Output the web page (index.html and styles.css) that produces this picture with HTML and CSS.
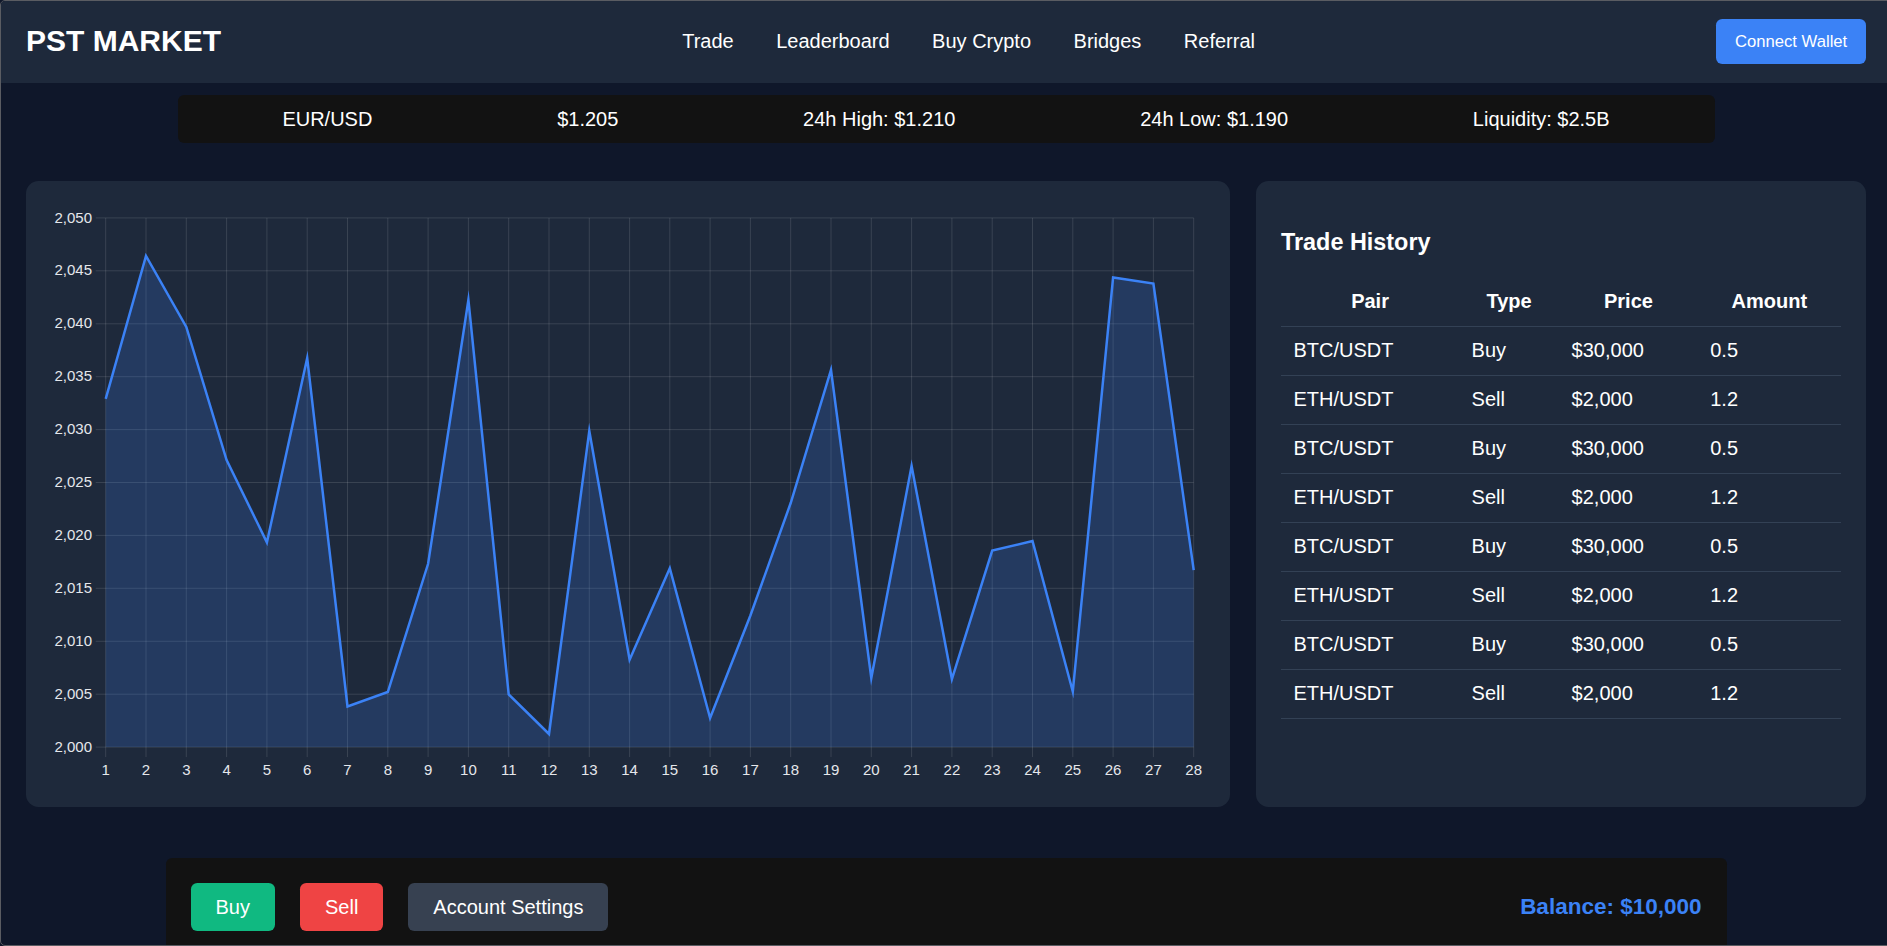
FILE: index.html
```html
<!DOCTYPE html>
<html lang="en">
<head>
<meta charset="utf-8">
<title>PST Market</title>
<link rel="stylesheet" href="styles.css">
</head>
<body>
<div class="frame">
  <header class="topbar">
    <div class="logo">PST MARKET</div>
    <nav class="nav">
      <a href="#">Trade</a>
      <a href="#">Leaderboard</a>
      <a href="#">Buy Crypto</a>
      <a href="#">Bridges</a>
      <a href="#">Referral</a>
    </nav>
    <button class="connect">Connect Wallet</button>
  </header>

  <main class="main">
    <div class="ticker">
      <span>EUR/USD</span>
      <span>$1.205</span>
      <span>24h High: $1.210</span>
      <span>24h Low: $1.190</span>
      <span>Liquidity: $2.5B</span>
    </div>

    <div class="panels">
      <section class="card chart-card">
        <svg class="chart" width="1154" height="576" viewBox="0 0 1154 576">
          <g class="grid">
            <line x1="44.7" y1="11.9" x2="1142.7" y2="11.9"/>
            <line x1="44.7" y1="64.8" x2="1142.7" y2="64.8"/>
            <line x1="44.7" y1="117.8" x2="1142.7" y2="117.8"/>
            <line x1="44.7" y1="170.7" x2="1142.7" y2="170.7"/>
            <line x1="44.7" y1="223.6" x2="1142.7" y2="223.6"/>
            <line x1="44.7" y1="276.5" x2="1142.7" y2="276.5"/>
            <line x1="44.7" y1="329.4" x2="1142.7" y2="329.4"/>
            <line x1="44.7" y1="382.3" x2="1142.7" y2="382.3"/>
            <line x1="44.7" y1="435.3" x2="1142.7" y2="435.3"/>
            <line x1="44.7" y1="488.2" x2="1142.7" y2="488.2"/>
            <line x1="44.7" y1="541.1" x2="1142.7" y2="541.1"/>
            <line x1="54.7" y1="11.9" x2="54.7" y2="551.1"/>
            <line x1="95.0" y1="11.9" x2="95.0" y2="551.1"/>
            <line x1="135.3" y1="11.9" x2="135.3" y2="551.1"/>
            <line x1="175.6" y1="11.9" x2="175.6" y2="551.1"/>
            <line x1="215.9" y1="11.9" x2="215.9" y2="551.1"/>
            <line x1="256.2" y1="11.9" x2="256.2" y2="551.1"/>
            <line x1="296.5" y1="11.9" x2="296.5" y2="551.1"/>
            <line x1="336.8" y1="11.9" x2="336.8" y2="551.1"/>
            <line x1="377.1" y1="11.9" x2="377.1" y2="551.1"/>
            <line x1="417.4" y1="11.9" x2="417.4" y2="551.1"/>
            <line x1="457.7" y1="11.9" x2="457.7" y2="551.1"/>
            <line x1="498.0" y1="11.9" x2="498.0" y2="551.1"/>
            <line x1="538.3" y1="11.9" x2="538.3" y2="551.1"/>
            <line x1="578.6" y1="11.9" x2="578.6" y2="551.1"/>
            <line x1="618.8" y1="11.9" x2="618.8" y2="551.1"/>
            <line x1="659.1" y1="11.9" x2="659.1" y2="551.1"/>
            <line x1="699.4" y1="11.9" x2="699.4" y2="551.1"/>
            <line x1="739.7" y1="11.9" x2="739.7" y2="551.1"/>
            <line x1="780.0" y1="11.9" x2="780.0" y2="551.1"/>
            <line x1="820.3" y1="11.9" x2="820.3" y2="551.1"/>
            <line x1="860.6" y1="11.9" x2="860.6" y2="551.1"/>
            <line x1="900.9" y1="11.9" x2="900.9" y2="551.1"/>
            <line x1="941.2" y1="11.9" x2="941.2" y2="551.1"/>
            <line x1="981.5" y1="11.9" x2="981.5" y2="551.1"/>
            <line x1="1021.8" y1="11.9" x2="1021.8" y2="551.1"/>
            <line x1="1062.1" y1="11.9" x2="1062.1" y2="551.1"/>
            <line x1="1102.4" y1="11.9" x2="1102.4" y2="551.1"/>
            <line x1="1142.7" y1="11.9" x2="1142.7" y2="551.1"/>
          </g>
          <polygon class="area" points="54.7,192.9 95.0,50 135.3,121 175.6,254.0 215.9,336.4 256.2,152 296.5,500.5 336.8,486 377.1,357.8 417.4,94 457.7,488.5 498.0,528 538.3,225 578.6,453.7 618.8,362.3 659.1,512 699.4,409.5 739.7,297 780.0,164 820.3,472 860.6,260 900.9,473 941.2,344.6 981.5,335 1021.8,485.5 1062.1,71.4 1102.4,77.5 1142.7,364.2 1142.7,541.1 54.7,541.1"/>
          <polyline class="line" points="54.7,192.9 95.0,50 135.3,121 175.6,254.0 215.9,336.4 256.2,152 296.5,500.5 336.8,486 377.1,357.8 417.4,94 457.7,488.5 498.0,528 538.3,225 578.6,453.7 618.8,362.3 659.1,512 699.4,409.5 739.7,297 780.0,164 820.3,472 860.6,260 900.9,473 941.2,344.6 981.5,335 1021.8,485.5 1062.1,71.4 1102.4,77.5 1142.7,364.2"/>
          <g class="ylabels">
            <text x="41" y="16.5">2,050</text>
            <text x="41" y="69.4">2,045</text>
            <text x="41" y="122.4">2,040</text>
            <text x="41" y="175.3">2,035</text>
            <text x="41" y="228.2">2,030</text>
            <text x="41" y="281.1">2,025</text>
            <text x="41" y="334.0">2,020</text>
            <text x="41" y="386.9">2,015</text>
            <text x="41" y="439.9">2,010</text>
            <text x="41" y="492.8">2,005</text>
            <text x="41" y="545.7">2,000</text>
          </g>
          <g class="xlabels">
            <text x="54.7" y="569">1</text>
            <text x="95.0" y="569">2</text>
            <text x="135.3" y="569">3</text>
            <text x="175.6" y="569">4</text>
            <text x="215.9" y="569">5</text>
            <text x="256.2" y="569">6</text>
            <text x="296.5" y="569">7</text>
            <text x="336.8" y="569">8</text>
            <text x="377.1" y="569">9</text>
            <text x="417.4" y="569">10</text>
            <text x="457.7" y="569">11</text>
            <text x="498.0" y="569">12</text>
            <text x="538.3" y="569">13</text>
            <text x="578.6" y="569">14</text>
            <text x="618.8" y="569">15</text>
            <text x="659.1" y="569">16</text>
            <text x="699.4" y="569">17</text>
            <text x="739.7" y="569">18</text>
            <text x="780.0" y="569">19</text>
            <text x="820.3" y="569">20</text>
            <text x="860.6" y="569">21</text>
            <text x="900.9" y="569">22</text>
            <text x="941.2" y="569">23</text>
            <text x="981.5" y="569">24</text>
            <text x="1021.8" y="569">25</text>
            <text x="1062.1" y="569">26</text>
            <text x="1102.4" y="569">27</text>
            <text x="1142.7" y="569">28</text>
          </g>
        </svg>
      </section>

      <section class="card history">
        <h3 class="history-title">Trade History</h3>
        <table class="trades">
          <thead>
            <tr><th>Pair</th><th>Type</th><th>Price</th><th>Amount</th></tr>
          </thead>
          <tbody>
            <tr><td>BTC/USDT</td><td>Buy</td><td>$30,000</td><td>0.5</td></tr>
            <tr><td>ETH/USDT</td><td>Sell</td><td>$2,000</td><td>1.2</td></tr>
            <tr><td>BTC/USDT</td><td>Buy</td><td>$30,000</td><td>0.5</td></tr>
            <tr><td>ETH/USDT</td><td>Sell</td><td>$2,000</td><td>1.2</td></tr>
            <tr><td>BTC/USDT</td><td>Buy</td><td>$30,000</td><td>0.5</td></tr>
            <tr><td>ETH/USDT</td><td>Sell</td><td>$2,000</td><td>1.2</td></tr>
            <tr><td>BTC/USDT</td><td>Buy</td><td>$30,000</td><td>0.5</td></tr>
            <tr><td>ETH/USDT</td><td>Sell</td><td>$2,000</td><td>1.2</td></tr>
          </tbody>
        </table>
      </section>
    </div>

    <div class="actions">
      <div class="btn-group">
        <button class="btn btn-buy">Buy</button>
        <button class="btn btn-sell">Sell</button>
        <button class="btn btn-settings">Account Settings</button>
      </div>
      <div class="balance">Balance: $10,000</div>
    </div>
  </main>
</div>
</body>
</html>
```

FILE: styles.css
```css
html, body {
  margin: 0;
  padding: 0;
  overflow: hidden;
  background: #0f172a;
}

.frame {
  width: 1892px;
  height: 946px;
  box-sizing: border-box;
  border: 1px solid #5a5c62;
  border-radius: 5px;
  overflow: hidden;
  background: #0f172a;
  font-family: "Liberation Sans", Arial, sans-serif;
  color: #ffffff;
}

.topbar {
  height: 82px;
  box-sizing: border-box;
  display: flex;
  justify-content: space-between;
  align-items: center;
  padding: 0 25px 2px;
  background: #1e293b;
}

.logo {
  font-size: 30px;
  line-height: 34px;
  font-weight: bold;
  color: #ffffff;
}

.nav {
  display: flex;
  gap: 42.5px;
}

.nav a {
  color: #ffffff;
  text-decoration: none;
  font-size: 20px;
  line-height: 23px;
}

.connect {
  background: #3b82f6;
  color: #ffffff;
  border: none;
  border-radius: 6.25px;
  padding: 13px 18.75px;
  font-family: "Liberation Sans", Arial, sans-serif;
  font-size: 16.67px;
  line-height: 19px;
}

.main {
  padding: 0 25px;
}

.ticker {
  width: 1537px;
  box-sizing: border-box;
  margin: 12px auto 0;
  padding: 12.5px;
  display: flex;
  justify-content: space-around;
  background: #121212;
  border-radius: 6.25px;
  font-size: 20px;
  line-height: 23px;
}

.panels {
  display: grid;
  grid-template-columns: 1204px 610px;
  gap: 26px;
  margin-top: 38px;
}

.card {
  background: #1e293b;
  border-radius: 12.5px;
  padding: 25px;
}

.chart {
  display: block;
}

.grid line {
  stroke: rgba(255, 255, 255, 0.12);
  stroke-width: 1;
}

.area {
  fill: rgba(59, 130, 246, 0.2);
  stroke: none;
}

.line {
  fill: none;
  stroke: #3b82f6;
  stroke-width: 2.5;
  stroke-linejoin: miter;
  stroke-miterlimit: 10;
}

.ylabels text,
.xlabels text {
  font-family: "Liberation Sans", Arial, sans-serif;
  font-size: 15px;
  fill: #e5e7eb;
}

.ylabels text {
  text-anchor: end;
}

.xlabels text {
  text-anchor: middle;
}

.history-title {
  font-size: 23.4px;
  line-height: 27px;
  margin: 22.5px 0 21.5px;
  font-weight: bold;
}

.trades {
  width: 100%;
  border-collapse: collapse;
  font-size: 20px;
  line-height: 23px;
}

.trades th {
  padding: 13px 12.5px 12.5px;
  text-align: center;
  font-weight: bold;
}

.trades td {
  padding: 12.5px;
  text-align: left;
}

.trades tr {
  border-bottom: 1px solid #334155;
}

.actions {
  width: 1561px;
  box-sizing: border-box;
  margin: 51px auto 0;
  padding: 25px;
  display: flex;
  justify-content: space-between;
  align-items: center;
  background: #121212;
  border-radius: 6.25px;
}

.btn-group {
  display: flex;
  gap: 25px;
}

.btn {
  border: none;
  border-radius: 6.25px;
  padding: 12.5px 25px;
  color: #ffffff;
  font-family: "Liberation Sans", Arial, sans-serif;
  font-size: 20px;
  line-height: 23px;
}

.btn-buy {
  background: #10b981;
}

.btn-sell {
  background: #ef4444;
}

.btn-settings {
  background: #374151;
}

.balance {
  font-size: 22.5px;
  font-weight: bold;
  color: #3b82f6;
}
```
